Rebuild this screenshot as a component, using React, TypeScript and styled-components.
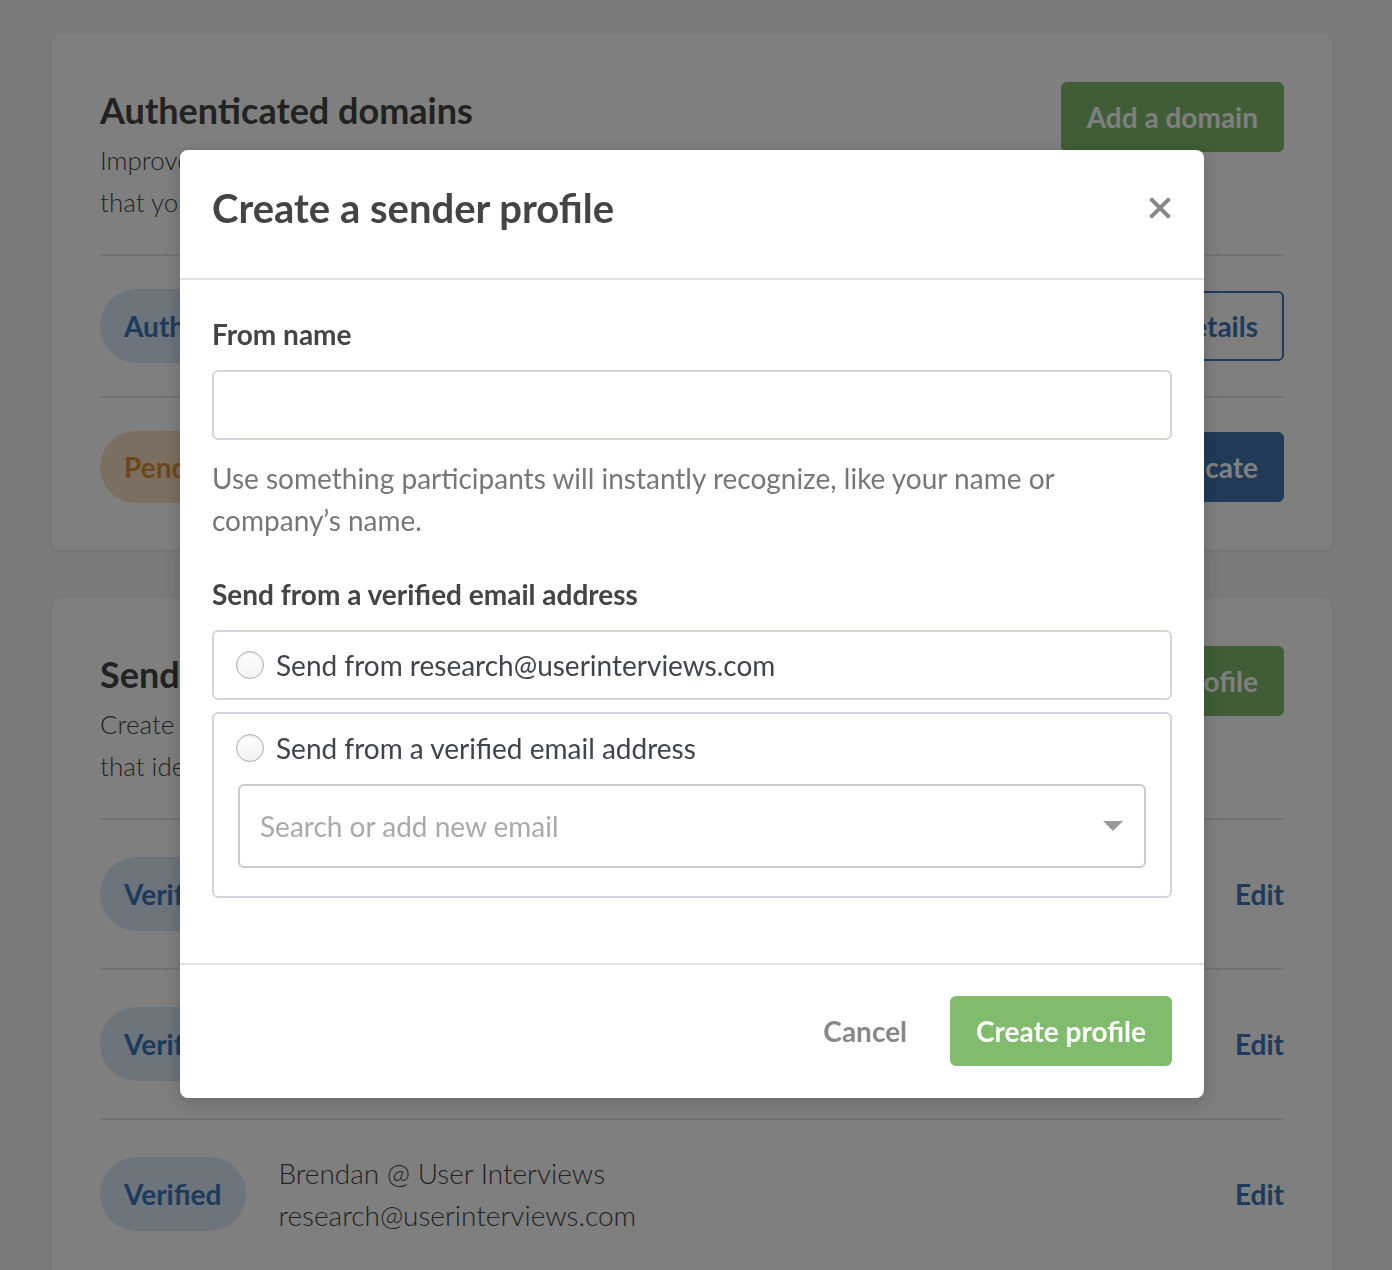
import React from "react";
import styled, { createGlobalStyle } from "styled-components";

const GlobalStyle = createGlobalStyle`
  html, body { margin: 0; padding: 0; }
  body {
    background: #f6f6f6;
    font-family: Lato, "Open Sans", "Liberation Sans", sans-serif;
    overflow: hidden;
  }
  * { box-sizing: border-box; }
`;

const Page = styled.div`
  width: 1384px;
  padding: 34px 52px 0;
  display: flex;
  flex-direction: column;
  gap: 48px;
`;

const Card = styled.section`
  background: #ffffff;
  border-radius: 8px;
  box-shadow: 0 1px 4px rgba(0, 0, 0, 0.08);
  padding: 48px 48px 14px;
`;

const CardHeader = styled.div`
  display: flex;
  justify-content: space-between;
  align-items: flex-start;
  padding-bottom: 31px;
  border-bottom: 2px solid #e6e6e6;
`;

const HeaderText = styled.div`
  padding-top: 8px;
  max-width: 860px;
`;

const CardTitle = styled.h2`
  margin: 0 0 8px;
  font-size: 36px;
  line-height: 41px;
  font-weight: 700;
  color: #444;
`;

const CardDesc = styled.p`
  margin: 0;
  font-size: 26px;
  line-height: 42px;
  font-weight: 300;
  color: #444;
`;

const Button = styled.button<{ $variant: "green" | "outline" | "blue" }>`
  font-family: inherit;
  font-size: 28px;
  font-weight: 700;
  height: 70px;
  padding: 0 24px;
  border-radius: 6px;
  cursor: pointer;
  white-space: nowrap;
  border: 2px solid
    ${(p) => (p.$variant === "green" ? "#80bb6e" : "#3f76b8")};
  background: ${(p) =>
    p.$variant === "green" ? "#80bb6e" : p.$variant === "blue" ? "#4274b0" : "#ffffff"};
  color: ${(p) => (p.$variant === "outline" ? "#3f76b8" : "#ffffff")};
`;

const Row = styled.div<{ $pad: number; $last?: boolean }>`
  display: flex;
  align-items: center;
  gap: 32px;
  padding: ${(p) => p.$pad}px 0;
  border-bottom: ${(p) => (p.$last ? "none" : "2px solid #e6e6e6")};
`;

const Badge = styled.span<{ $tone: "blue" | "orange" }>`
  display: inline-flex;
  align-items: center;
  height: ${(p) => (p.$tone === "orange" ? 72 : 74)}px;
  padding: 0 25px 0 24px;
  border-radius: 37px;
  font-size: 28px;
  font-weight: 700;
  background: ${(p) => (p.$tone === "blue" ? "#dbe8f6" : "#f6dec2")};
  color: ${(p) => (p.$tone === "blue" ? "#3c74b8" : "#df8f38")};
`;

const RowText = styled.div`
  flex: 1;
  font-size: 28px;
  line-height: 42px;
  font-weight: 300;
  color: #444;
`;

const EditLink = styled.a`
  font-size: 28px;
  font-weight: 700;
  color: #3c74b8;
  text-decoration: none;
`;

const Overlay = styled.div`
  position: fixed;
  inset: 0;
  background: rgba(0, 0, 0, 0.5);
  display: flex;
  justify-content: center;
  align-items: flex-start;
  padding: 150px 8px 0 0;
`;

const Modal = styled.div`
  width: 1024px;
  background: #ffffff;
  border-radius: 8px;
  box-shadow: 0 4px 20px rgba(0, 0, 0, 0.2);
`;

const ModalHeader = styled.div`
  height: 130px;
  display: flex;
  align-items: center;
  justify-content: space-between;
  padding: 0 32px 12px;
  border-bottom: 2px solid #e2e2e2;
`;

const ModalTitle = styled.h1`
  margin: 0;
  font-size: 40px;
  font-weight: 700;
  color: #444;
`;

const CloseButton = styled.button`
  border: none;
  background: none;
  padding: 0;
  width: 24px;
  height: 24px;
  cursor: pointer;
  display: flex;
  align-items: center;
  justify-content: center;
`;

const ModalBody = styled.div`
  padding: 34px 32px 65px;
  display: flex;
  flex-direction: column;
`;

const Label = styled.label<{ $top?: number }>`
  font-size: 28px;
  line-height: 40px;
  font-weight: 700;
  color: #444;
  margin-top: ${(p) => p.$top ?? 0}px;
`;

const TextInput = styled.input`
  margin-top: 16px;
  height: 70px;
  width: 100%;
  border: 2px solid #d2d6dc;
  border-radius: 6px;
  font-family: inherit;
  font-size: 28px;
  padding: 0 20px;
  outline: none;
`;

const Help = styled.p`
  margin: 17px 0 0;
  font-size: 28px;
  line-height: 42px;
  color: #777;
  max-width: 900px;
`;

const Options = styled.div`
  margin-top: 16px;
  display: flex;
  flex-direction: column;
  gap: 12px;
`;

const OptionBox = styled.div<{ $expanded?: boolean }>`
  border: 2px solid #d2d6dc;
  border-radius: 6px;
  padding: ${(p) => (p.$expanded ? "16px 24px 28px 22px" : "0 24px 0 22px")};
  min-height: ${(p) => (p.$expanded ? "auto" : "70px")};
  display: flex;
  flex-direction: column;
  justify-content: center;
`;

const OptionLine = styled.label`
  display: flex;
  align-items: center;
  gap: 12px;
  height: 36px;
  font-size: 28px;
  color: #40454c;
  cursor: pointer;
`;

const Radio = styled.span`
  width: 28px;
  height: 28px;
  border-radius: 50%;
  border: 1.5px solid #b0b0b0;
  background: linear-gradient(#ffffff, #f2f2f2);
  box-shadow: inset 0 1px 2px rgba(0, 0, 0, 0.12);
  flex-shrink: 0;
`;

const SelectBox = styled.div`
  margin: 18px 0 0 2px;
  height: 84px;
  border: 2px solid #cccccc;
  border-radius: 6px;
  display: flex;
  align-items: center;
  justify-content: space-between;
  padding: 0 20px 0 20px;
  font-size: 28px;
  color: #aaaaaa;
`;

const ModalFooter = styled.div`
  border-top: 2px solid #e2e2e2;
  padding: 31px 32px 32px;
  display: flex;
  justify-content: flex-end;
  align-items: center;
  gap: 43px;
`;

const CancelButton = styled.button`
  border: none;
  background: none;
  font-family: inherit;
  font-size: 28px;
  font-weight: 700;
  color: #888;
  padding: 0;
  cursor: pointer;
`;

const senders = [
  { name: "Research @ User Interviews", email: "research@userinterviews.com" },
  { name: "Team @ User Interviews", email: "team@userinterviews.com" },
  { name: "Brendan @ User Interviews", email: "research@userinterviews.com" },
];

export default function App() {
  return (
    <>
      <GlobalStyle />
      <Page>
        <Card>
          <CardHeader>
            <HeaderText>
              <CardTitle>Authenticated domains</CardTitle>
              <CardDesc>
                Improve email deliverability by authenticating the domains
                <br />
                that you send participant emails from.
              </CardDesc>
            </HeaderText>
            <Button $variant="green">Add a domain</Button>
          </CardHeader>
          <Row $pad={33}>
            <Badge $tone="blue">Authenticated</Badge>
            <RowText>userinterviews.com</RowText>
            <Button $variant="outline">View details</Button>
          </Row>
          <Row $pad={33} $last>
            <Badge $tone="orange">Pending</Badge>
            <RowText>mail.userinterviews.com</RowText>
            <Button $variant="blue">Authenticate</Button>
          </Row>
        </Card>
        <Card>
          <CardHeader>
            <HeaderText>
              <CardTitle>Sender profiles</CardTitle>
              <CardDesc>
                Create sender profiles with a name and verified email address
                <br />
                that identify you to your participants.
              </CardDesc>
            </HeaderText>
            <Button $variant="green">Create profile</Button>
          </CardHeader>
          {senders.map((s, i) => (
            <Row key={i} $pad={32} $last={i === senders.length - 1}>
              <Badge $tone="blue">Verified</Badge>
              <RowText>
                {s.name}
                <br />
                {s.email}
              </RowText>
              <EditLink href="#">Edit</EditLink>
            </Row>
          ))}
        </Card>
      </Page>
      <Overlay>
        <Modal>
          <ModalHeader>
            <ModalTitle>Create a sender profile</ModalTitle>
            <CloseButton aria-label="Close">
              <svg width="22" height="22" viewBox="0 0 22 22">
                <path
                  d="M3 3 L19 19 M19 3 L3 19"
                  stroke="#888"
                  strokeWidth="4"
                  strokeLinecap="square"
                />
              </svg>
            </CloseButton>
          </ModalHeader>
          <ModalBody>
            <Label>From name</Label>
            <TextInput type="text" />
            <Help>
              Use something participants will instantly recognize, like your
              name or company’s name.
            </Help>
            <Label $top={33}>Send from a verified email address</Label>
            <Options>
              <OptionBox>
                <OptionLine>
                  <Radio />
                  Send from research@userinterviews.com
                </OptionLine>
              </OptionBox>
              <OptionBox $expanded>
                <OptionLine>
                  <Radio />
                  Send from a verified email address
                </OptionLine>
                <SelectBox>
                  Search or add new email
                  <svg width="22" height="12" viewBox="0 0 22 12">
                    <path d="M1 1 L21 1 L11 11 Z" fill="#999" />
                  </svg>
                </SelectBox>
              </OptionBox>
            </Options>
          </ModalBody>
          <ModalFooter>
            <CancelButton>Cancel</CancelButton>
            <Button $variant="green">Create profile</Button>
          </ModalFooter>
        </Modal>
      </Overlay>
    </>
  );
}
